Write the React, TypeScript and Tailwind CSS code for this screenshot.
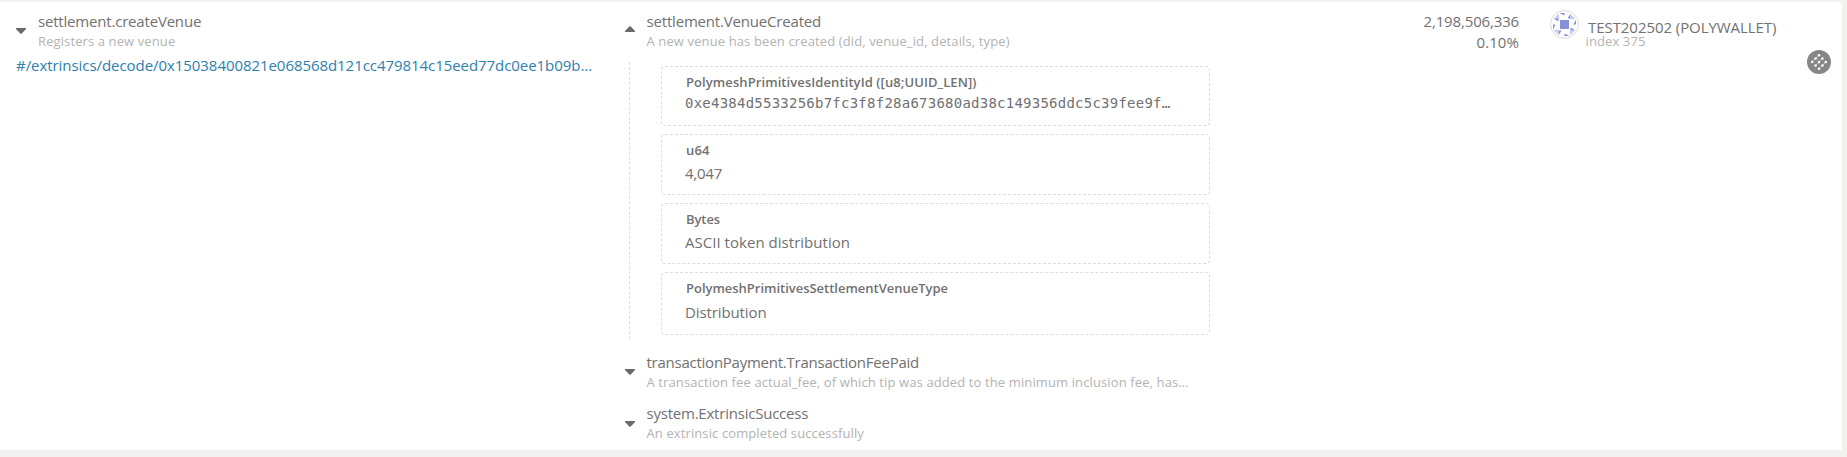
import type { ReactNode } from 'react';

function Caret({ up = false, className = '' }: { up?: boolean; className?: string }) {
  return (
    <svg className={`shrink-0 ${className}`} width="10" height="6" viewBox="0 0 10 6">
      <path d={up ? 'M0 6V5L4.2.6Q5 0 5.800.6L10 5V6Z' : 'M0 0H10V1L5.8 5.4Q5 6 4.2 5.4L0 1Z'} fill="#6a6a6a" />
    </svg>
  );
}

function Summary({ name, info, track, infoTrack = 'tracking-[0.11px]' }: { name: string; info: string; track: string; infoTrack?: string }) {
  return (
    <div className="whitespace-nowrap">
      <div className={`text-[15px] leading-5 ${track}`}>{name}</div>
      <div className={`mt-px text-[13px] leading-[18px] text-[#b3b3b3] ${infoTrack}`}>{info}</div>
    </div>
  );
}

function Param({ type, track, className, children }: { type: string; track: string; className: string; children: ReactNode }) {
  return (
    <div className={`w-[549px] rounded border border-dashed border-[#dddddd] pl-[23px] whitespace-nowrap ${className}`}>
      <div className={`pl-px text-[13px] leading-[18px] font-semibold ${track}`}>{type}</div>
      {children}
    </div>
  );
}

function Identicon() {
  return (
    <svg className="shrink-0" width="30" height="30" viewBox="0 0 30 30">
      <circle cx="15.500" cy="15.500" r="14" fill="#fff" stroke="#dcdcdc" />
      {[0, 90, 180, 270].map((angle) => (
        <g key={angle} transform={`rotate(${angle} 15.500 15.500)`}>
          <path d="M5.500 9.500L9.500 4.500L10.500 9.500Z" fill="#c5ccee" />
          <path d="M10.500 4H15.500V6.500Z" fill="#8592d6" />
          <path d="M21.500 4.500V9.500H18.500Z" fill="#8592d6" />
        </g>
      ))}
      <rect x="11" y="11" width="9" height="9" fill="#8592d6" />
    </svg>
  );
}

function NetworkButton() {
  return (
    <svg className="shrink-0" width="24" height="24" viewBox="0 0 24 24">
      <circle cx="12" cy="12" r="12" fill="#868686" />
      <g stroke="#fff" strokeWidth="1" opacity="0.5">
        <path d="M5.200 12L12 5.200M8.600 15.400L15.400 8.600M12 18.800L18.800 12" />
      </g>
      <g fill="#fff">
        {[-1, 0, 1].flatMap((a) => [-1, 0, 1].map((b) => (
          <circle key={`${a}${b}`} cx={12 + (a + b) * 3.4} cy={12 + (a - b) * 3.4} r="1.25" />
        )))}
      </g>
    </svg>
  );
}

export default function App() {
  return (
    <div className="h-[457px] overflow-hidden bg-[#f3f2f1] pt-0.5 font-['Open_Sans',sans-serif] text-[#717171]">
      <div className="flex h-[448px] w-[1842px] rounded-tr bg-white">
        <section className="w-[625px] pt-[9px] pl-4">
          <div className="flex gap-3">
            <Caret className="mt-[17px]" />
            <Summary name="settlement.createVenue" info="Registers a new venue" track="tracking-[-0.19px]" />
          </div>
          <a className="mt-[5px] block text-[15px] leading-5 tracking-[-0.057px] whitespace-nowrap text-[#2f80ad]">
            #/extrinsics/decode/0x15038400821e068568d121cc479814c15eed77dc0ee1b09b…
          </a>
        </section>

        <section className="w-[700px] pt-[9px]">
          <div className="flex gap-[11.5px]">
            <Caret up className="mt-[15px]" />
            <Summary name="settlement.VenueCreated" info="A new venue has been created (did, venue_id, details, type)" track="tracking-[-0.18px]" infoTrack="tracking-[0.12px]" />
          </div>
          <div className="mt-3 ml-1 flex h-[277px] flex-col gap-2 border-l border-dashed border-[#dddddd] pt-1 pl-[31px]">
            <Param type="PolymeshPrimitivesIdentityId ([u8;UUID_LEN])" track="tracking-[0.085px]" className="h-[60px] pt-[6px]">
              <div className="mt-[3px] font-['DejaVu_Sans_Mono',monospace] text-[14px] leading-[18px] tracking-[0.24px]">
                0xe4384d5533256b7fc3f8f28a673680ad38c149356ddc5c39fee9f…
              </div>
            </Param>
            <Param type="u64" track="tracking-[0.2px]" className="h-[61px] pt-[6px]">
              <div className="mt-1 text-[15px] leading-5 tracking-[-0.24px]">4,047</div>
            </Param>
            <Param type="Bytes" track="tracking-[-0.08px]" className="h-[61px] pt-[6px]">
              <div className="mt-1 text-[15px] leading-5 tracking-[0.03px]">ASCII token distribution</div>
            </Param>
            <Param type="PolymeshPrimitivesSettlementVenueType" track="tracking-[-0.016px]" className="h-[63px] pt-[6px]">
              <div className="mt-[5px] text-[15px] leading-5 tracking-[-0.11px]">Distribution</div>
            </Param>
          </div>
          <div className="mt-[13px] flex gap-[11.5px]">
            <Caret className="mt-[17px]" />
            <Summary name="transactionPayment.TransactionFeePaid" info="A transaction fee actual_fee, of which tip was added to the minimum inclusion fee, has…" track="tracking-[-0.245px]" infoTrack="tracking-[0.117px]" />
          </div>
          <div className="mt-3 flex gap-[11.5px]">
            <Caret className="mt-[18px]" />
            <Summary name="system.ExtrinsicSuccess" info="An extrinsic completed successfully" track="tracking-[-0.22px]" />
          </div>
        </section>

        <section className="w-[194px] pt-[9px] text-right text-[15px] leading-[21px]">
          <div className="tracking-[-0.15px]">2,198,506,336</div>
          <div className="tracking-[0.08px]">0.10%</div>
        </section>

        <section className="flex flex-1 flex-col pt-[7px] pl-[30px]">
          <div className="flex">
            <Identicon />
            <div className="whitespace-nowrap">
              <div className="mt-[11px] ml-[9px] text-[15px] leading-[14px] tracking-[-0.06px]">TEST202502 (POLYWALLET)</div>
              <div className="ml-[6.5px] text-[13px] leading-[14px] tracking-[0.11px] text-[#b3b3b3]">index 375</div>
            </div>
          </div>
          <div className="mt-0.5 mr-[11px] self-end">
            <NetworkButton />
          </div>
        </section>
      </div>
    </div>
  );
}
